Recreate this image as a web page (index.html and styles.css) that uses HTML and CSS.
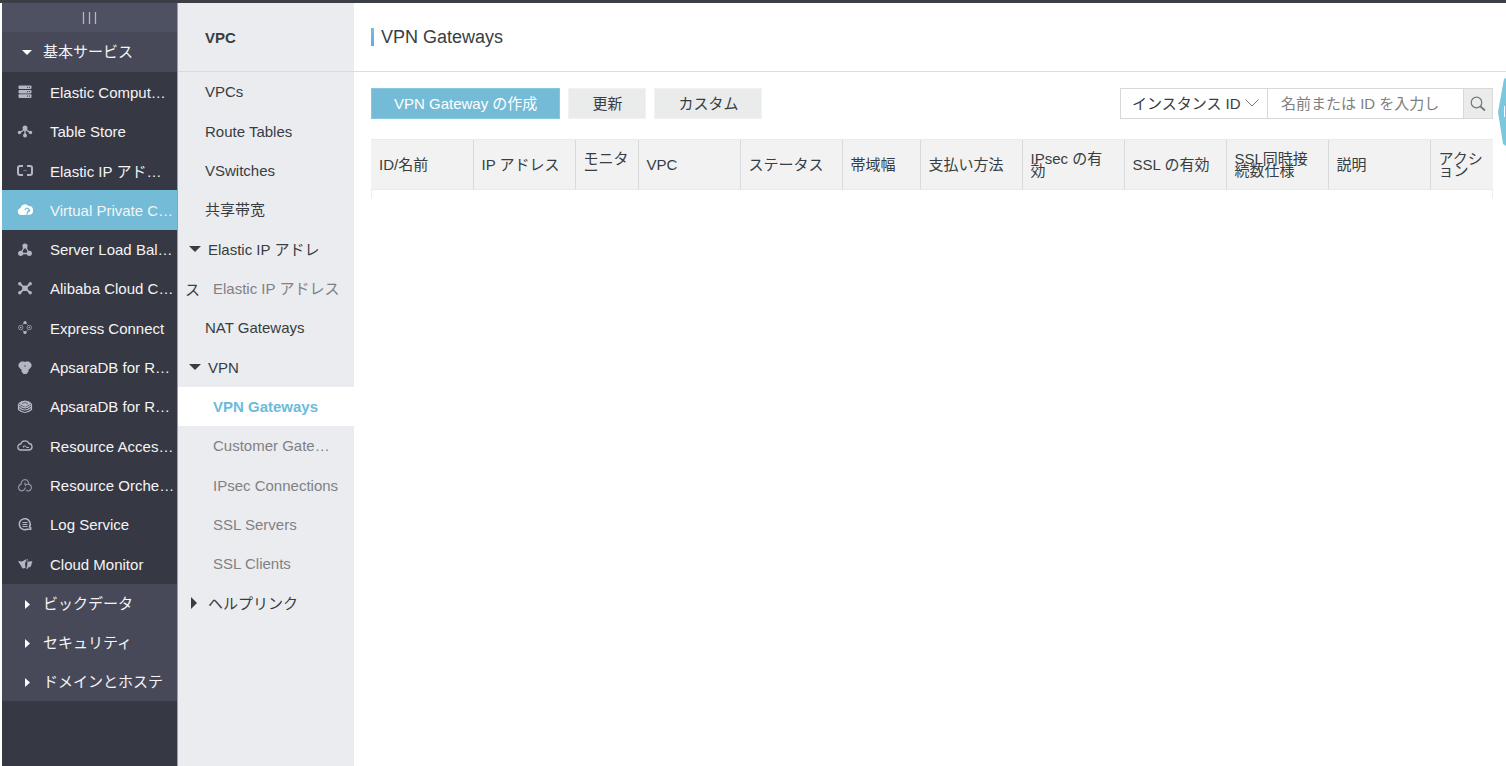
FILE: index.html
```html
<!DOCTYPE html>
<html lang="ja">
<head>
    <meta charset="UTF-8">
    <meta name="viewport" content="width=device-width, initial-scale=1.0">
    <title>VPN Gateways</title>
    <link rel="stylesheet" href="styles.css">
</head>
<body>
    <div class="topbar"></div>
    <div class="layout">
        <nav class="sidebar">
            <button class="sidebar-fold" aria-label="Menu">
                <svg width="16" height="12" viewBox="0 0 16 12"><path d="M1.500 0v12M7.500 0v12M13.500 0v12" stroke="#b4b7c3" stroke-width="1.300"/></svg>
            </button>
            <button class="group-title group-open">
                <svg width="10" height="10" viewBox="0 0 10 10"><path d="M0 3h10L5 8z" fill="#fff"/></svg>
                <span>基本サービス</span>
            </button>
            <ul class="service-list">
                <li><a href="#">
                    <svg class="icon" viewBox="0 0 16 16"><g fill="#b4b7c3"><rect x="1.500" y="1.500" width="13" height="3.600" rx="1"/><rect x="1.500" y="5.900" width="13" height="3.600" rx="1"/><rect x="1.500" y="10.300" width="13" height="3.600" rx="1"/></g><path d="M10 3.300h3M10 7.700h3M10 12.100h3" stroke="#373844" stroke-dasharray="1 1"/></svg>
                    <span>Elastic Comput…</span>
                </a></li>
                <li><a href="#">
                    <svg class="icon" viewBox="0 0 16 16"><path d="M8 4v8M8 5L3 8.500M8 5l5 3.500" stroke="#b4b7c3" stroke-width="1.400"/><g fill="#b4b7c3"><circle cx="8" cy="4" r="2.500"/><circle cx="2.500" cy="8.500" r="1.700"/><circle cx="13.500" cy="8.500" r="1.700"/><circle cx="8" cy="11.500" r="2"/></g></svg>
                    <span>Table Store</span>
                </a></li>
                <li><a href="#">
                    <svg class="icon" viewBox="0 0 16 16"><path d="M6 3H3Q1 3 1 5v5q0 2 2 2h3M10 3h3q2 0 2 2v5q0 2-2 2h-3" fill="none" stroke="#b4b7c3" stroke-width="2"/><path d="M6.500 7.500h3" stroke="#777b87"/></svg>
                    <span>Elastic IP アド…</span>
                </a></li>
                <li class="active"><a href="#">
                    <svg class="icon" viewBox="0 0 16 16"><path d="M4 13a3.500 3.500 0 0 1-.5-6.900A4.500 4.500 0 0 1 11.500 4a4.500 4.500 0 0 1 1.500 8.800z" fill="#fff"/><path d="M8 8q1-3 3.500-1t-.500 3M10 12.500l.5-2.500 2-2.500" stroke="#73bbd7" stroke-width="1.200" fill="none"/></svg>
                    <span>Virtual Private C…</span>
                </a></li>
                <li><a href="#">
                    <svg class="icon" viewBox="0 0 16 16"><path d="M8 4L3.500 11.500h9z" fill="none" stroke="#b4b7c3" stroke-width="1.300"/><g fill="#b4b7c3"><circle cx="8" cy="4" r="2.600"/><circle cx="3.700" cy="11.300" r="2.600"/><circle cx="12.300" cy="11.300" r="2.600"/></g></svg>
                    <span>Server Load Bal…</span>
                </a></li>
                <li><a href="#">
                    <svg class="icon" viewBox="0 0 16 16"><path d="M3 3l10 8.500M13 3L3 11.500" stroke="#b4b7c3" stroke-width="1.700"/><g fill="#b4b7c3"><circle cx="8" cy="7.200" r="2.800"/><circle cx="2.800" cy="2.700" r="1.700"/><circle cx="13.200" cy="2.700" r="1.700"/><circle cx="2.800" cy="11.700" r="1.700"/><circle cx="13.200" cy="11.700" r="1.700"/></g></svg>
                    <span>Alibaba Cloud C…</span>
                </a></li>
                <li><a href="#">
                    <svg class="icon" viewBox="0 0 16 16"><g fill="none" stroke="#8f929e"><circle cx="3.700" cy="7.500" r="2.200"/><circle cx="12.300" cy="7.500" r="2.200"/><path d="M5.500 4.500L8 2.500l2.500 2M5.500 10.500L8 12.500l2.500-2"/></g><g fill="#b4b7c3"><circle cx="8" cy="2.500" r="1.600"/><circle cx="8" cy="12.500" r="1.600"/><circle cx="3.700" cy="7.500" r=".8"/><circle cx="12.300" cy="7.500" r=".8"/></g></svg>
                    <span>Express Connect</span>
                </a></li>
                <li><a href="#">
                    <svg class="icon" viewBox="0 0 16 16"><path d="M4 1.500h3l1 .6 1-.6h3L14.500 4v2.500L12.500 9l-1 .5v2L9.500 14h-3l-2-2.500v-2L3.500 9l-2-2.500V4z" fill="#b4b7c3"/><path d="M7.200 6h1.600M8 5.200v1.600" stroke="#6c6f7b"/></svg>
                    <span>ApsaraDB for R…</span>
                </a></li>
                <li><a href="#">
                    <svg class="icon" viewBox="0 0 16 16"><path d="M1 4.500Q4 1.500 8 1.500t7 3L8 8z" fill="#b4b7c3"/><path d="M1.500 5v5.500Q5 13.500 8 13.500t6.500-3V5M1.500 8Q5 11 8 11t6.500-3M1.500 5.500Q5 8.800 8 8.800t6.500-3.300" fill="none" stroke="#b4b7c3" stroke-width="1.200"/><path d="M5 4.500l3-1 3 1" fill="none" stroke="#6c6f7b"/></svg>
                    <span>ApsaraDB for R…</span>
                </a></li>
                <li><a href="#">
                    <svg class="icon" viewBox="0 0 16 16"><path d="M4 12a3 3 0 0 1-.3-6A4.400 4.400 0 0 1 12 5.500a3.300 3.300 0 0 1 .5 6.500z" fill="none" stroke="#b4b7c3" stroke-width="1.300"/><path d="M6.500 9.500V8h2l1 1.500H12" fill="none" stroke="#b4b7c3"/></svg>
                    <span>Resource Acces…</span>
                </a></li>
                <li><a href="#">
                    <svg class="icon" viewBox="0 0 16 16"><g fill="none" stroke="#9093a0" stroke-width="1.200"><path d="M4.300 6.500a3.800 3.800 0 1 1 7.200.4M4.600 6.200a3.300 3.300 0 1 0 2.900 5.200L8.500 9.500M8 8a3.400 3.400 0 1 1 1 4.300M8 4.500V7"/></g></svg>
                    <span>Resource Orche…</span>
                </a></li>
                <li><a href="#">
                    <svg class="icon" viewBox="0 0 16 16"><path d="M12.500 10a5.500 5.500 0 1 0-2.500 2.200h3.700v-1.500z" fill="none" stroke="#b4b7c3" stroke-width="1.500"/><path d="M5.500 5.500h5M5.500 7.500h5M5.500 9.500h5" stroke="#b4b7c3"/></svg>
                    <span>Log Service</span>
                </a></li>
                <li><a href="#">
                    <svg class="icon" viewBox="0 0 16 16"><path d="M1 5l4 .5L9.500 3 8 8l.5 4-3 .5L3.500 9z" fill="#b4b7c3"/><path d="M10.500 3l-.5 3.500M9.800 13L11 6l4-.5-1.500 5-2 .5z" fill="#b4b7c3" stroke="#b4b7c3" stroke-width=".6"/></svg>
                    <span>Cloud Monitor</span>
                </a></li>
            </ul>
            <button class="group-title">
                <svg width="10" height="10" viewBox="0 0 10 10"><path d="M3 1l5 4.500L3 10z" fill="#fff"/></svg>
                <span>ビックデータ</span>
            </button>
            <button class="group-title">
                <svg width="10" height="10" viewBox="0 0 10 10"><path d="M3 1l5 4.500L3 10z" fill="#fff"/></svg>
                <span>セキュリティ</span>
            </button>
            <button class="group-title">
                <svg width="10" height="10" viewBox="0 0 10 10"><path d="M3 1l5 4.500L3 10z" fill="#fff"/></svg>
                <span>ドメインとホステ</span>
            </button>
        </nav>

        <nav class="subnav">
            <h2>VPC</h2>
            <ul>
                <li><a href="#">VPCs</a></li>
                <li><a href="#">Route Tables</a></li>
                <li><a href="#">VSwitches</a></li>
                <li><a href="#">共享带宽</a></li>
                <li><button class="toggle"><svg width="12" height="12" viewBox="0 0 12 12"><path d="M0 3h12L6 9z" fill="#373d41"/></svg>Elastic IP アドレス</button></li>
                <li class="child"><a href="#">Elastic IP アドレス</a></li>
                <li><a href="#">NAT Gateways</a></li>
                <li><button class="toggle"><svg width="12" height="12" viewBox="0 0 12 12"><path d="M0 3h12L6 9z" fill="#373d41"/></svg>VPN</button></li>
                <li class="child current"><a href="#">VPN Gateways</a></li>
                <li class="child"><a href="#">Customer Gate…</a></li>
                <li class="child"><a href="#">IPsec Connections</a></li>
                <li class="child"><a href="#">SSL Servers</a></li>
                <li class="child"><a href="#">SSL Clients</a></li>
                <li><button class="toggle"><svg width="12" height="12" viewBox="0 0 12 12"><path d="M2 0l6 6-6 6z" fill="#373d41"/></svg>ヘルプリンク</button></li>
            </ul>
        </nav>

        <main class="content">
            <header class="page-header">
                <h1>VPN Gateways</h1>
            </header>
            <div class="toolbar">
                <button class="btn primary-btn">VPN Gateway の作成</button>
                <button class="btn">更新</button>
                <button class="btn">カスタム</button>
                <form class="search">
                    <div class="search-type">
                        <select aria-label="検索条件">
                            <option>インスタンス ID</option>
                        </select>
                        <svg width="14" height="8" viewBox="0 0 14 8"><path d="M.5.500L7 7 13.500.500" fill="none" stroke="#777"/></svg>
                    </div>
                    <input type="text" aria-label="検索" placeholder="名前または ID を入力し">
                    <button type="submit" aria-label="検索する">
                        <svg width="16" height="16" viewBox="0 0 16 16"><circle cx="6.500" cy="6.500" r="5.300" fill="none" stroke="#777" stroke-width="1.200"/><path d="M10.500 10.500l4.500 4" stroke="#777" stroke-width="1.800"/></svg>
                    </button>
                </form>
            </div>
            <div class="table-wrapper">
                <table>
                    <colgroup>
                        <col class="col"><col class="col"><col class="col-narrow"><col class="col"><col class="col"><col class="col-medium">
                        <col class="col"><col class="col"><col class="col"><col class="col"><col class="col"><col>
                    </colgroup>
                    <thead>
                        <tr>
                            <th>ID/名前</th>
                            <th>IP アドレス</th>
                            <th>モニター</th>
                            <th>VPC</th>
                            <th>ステータス</th>
                            <th>帯域幅</th>
                            <th>支払い方法</th>
                            <th>IPsec の有効</th>
                            <th>SSL の有効</th>
                            <th>SSL同時接続数仕様</th>
                            <th>説明</th>
                            <th>アクション</th>
                        </tr>
                    </thead>
                </table>
            </div>
        </main>
    </div>
    <svg class="side-tab" width="8" height="68" viewBox="0 0 8 68"><path d="M8 0L6 1 0 34l5 32 3 2z" fill="#7ac7de"/><path d="M6.500 28v11" stroke="#fff"/></svg>
</body>
</html>
```

FILE: styles.css
```css
* {
    box-sizing: border-box;
}
body {
    margin: 0;
    font-family: "Liberation Sans", "Noto Sans CJK JP", sans-serif;
    font-size: 15px;
    color: #373d41;
    background: #fff;
}
button, input, select {
    font: inherit;
    color: inherit;
    border: 0;
    border-radius: 0;
    margin: 0;
    padding: 0;
    background: none;
}
button {
    cursor: pointer;
}
a {
    color: inherit;
    text-decoration: none;
}
ul {
    list-style: none;
    margin: 0;
    padding: 0;
    display: grid;
    grid-auto-rows: 40px 39px 39px;
}
svg {
    flex: none;
}
.topbar {
    height: 3px;
    background: #3b3e45;
}
.layout {
    display: flex;
    min-height: calc(100vh - 3px);
    padding-left: 2px;
}

/* dark service menu */
.sidebar {
    flex: none;
    width: 176px;
    background: #363843;
    border-right: 1px solid #9b9da8;
    color: #f4f4f6;
    white-space: nowrap;
    overflow: hidden;
}
.sidebar-fold {
    display: flex;
    align-items: center;
    justify-content: center;
    width: 100%;
    height: 29px;
    background: #4e5162;
}
.group-title {
    display: flex;
    align-items: center;
    gap: 11px;
    width: 100%;
    height: 39px;
    padding-left: 20px;
    background: #474959;
}
.group-title span {
    padding-bottom: 3px;
}
.group-open {
    height: 40px;
}
.service-list a {
    display: flex;
    align-items: center;
    gap: 17px;
    height: 100%;
    padding-left: 15px;
}
.service-list .active {
    background: #73bbd7;
}
.icon {
    width: 16px;
    height: 16px;
}

/* product menu */
.subnav {
    flex: none;
    width: 176px;
    background: #ebecf0;
}
.subnav h2 {
    height: 69px;
    margin: 0;
    padding-left: 27px;
    border-bottom: 1px solid #d9dadd;
    font-size: 15px;
    line-height: 69px;
}
.subnav li {
    line-height: 40px;
}
.subnav a {
    display: block;
    height: 100%;
    padding-left: 27px;
}
.subnav .child a {
    padding-left: 35px;
    color: #7f8184;
}
.subnav .current a {
    background: #fff;
    color: #6cbbd8;
    font-weight: bold;
}
.toggle {
    display: block;
    width: 100%;
    height: 40px;
    padding: 0 32px 0 7px;
    line-height: 40px;
    text-align: left;
}
.toggle svg {
    margin: 0 7px 0 4px;
}

.content {
    flex: 1;
    min-width: 0;
}
.page-header {
    display: flex;
    align-items: center;
    height: 69px;
    padding-left: 17px;
    border-bottom: 1px solid #dddddd;
}
.page-header h1 {
    display: flex;
    align-items: center;
    gap: 7px;
    margin: 0;
    font-size: 18px;
    font-weight: normal;
    line-height: 20px;
}
.page-header h1::before {
    content: "";
    width: 3px;
    height: 18px;
    background: linear-gradient(#6cc3dc, #69a5ee);
}
.toolbar {
    display: flex;
    gap: 8px;
    padding: 16px 13px 20px 17px;
}
.btn {
    height: 31px;
    padding: 0 23px 2px;
    background: #eaecec;
    border: 1px solid #f1f2f2;
}
.primary-btn {
    padding: 0 22px 2px;
    background: #73bbd7;
    border-color: #86c8df;
    color: #fff;
}
.search {
    display: flex;
    width: 373px;
    height: 31px;
    margin-left: auto;
    border: 1px solid #d7d8d9;
}
.search-type {
    position: relative;
    width: 147px;
    border-right: 1px solid #d7d8d9;
}
.search-type select {
    appearance: none;
    width: 100%;
    height: 100%;
    padding-left: 11px;
}
.search-type svg {
    position: absolute;
    top: 10px;
    right: 8px;
    pointer-events: none;
}
.search input {
    flex: 1;
    min-width: 0;
    padding: 0 13px;
}
.search input::placeholder {
    color: #808080;
}
.search button {
    display: flex;
    align-items: center;
    justify-content: center;
    width: 29px;
    border-left: 1px solid #d7d8d9;
    background: #eaecec;
}
.table-wrapper {
    margin: 0 13px 0 17px;
    padding-bottom: 8px;
    box-shadow: inset 1px 0 #ebecec, inset -1px 0 #ebecec;
}
table {
    width: 100%;
    table-layout: fixed;
    border-collapse: collapse;
}
.col {
    width: 102px;
}
.col-narrow {
    width: 63px;
}
.col-medium {
    width: 78px;
}
th {
    height: 50px;
    padding: 0 8px;
    background: #f2f2f2;
    border: solid #e9eaea;
    border-width: 1px 0;
    font-weight: normal;
    line-height: 12px;
    text-align: left;
}
th + th {
    border-left: 1px solid #d9dadb;
}

.side-tab {
    position: fixed;
    top: 78px;
    right: 0;
}
```
